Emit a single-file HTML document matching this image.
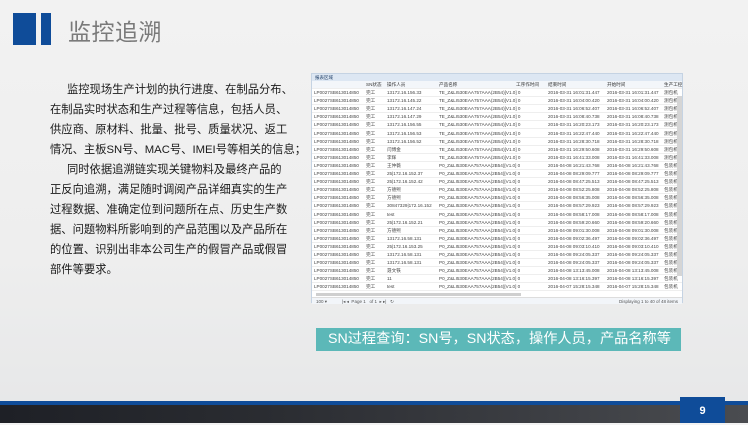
<!DOCTYPE html>
<html><head><meta charset="utf-8"><style>
*{margin:0;padding:0;box-sizing:border-box}
body{width:748px;height:423px;overflow:hidden;background:linear-gradient(180deg,#f2f2f2 0%,#eeeeee 60%,#e6e7e8 100%);font-family:"Liberation Sans","Noto Sans CJK SC",sans-serif;position:relative}
.b1{position:absolute;left:13px;top:13px;width:23px;height:32px;background:#0f4c99}
.b2{position:absolute;left:41px;top:13px;width:10px;height:32px;background:#0f4c99}
.title{position:absolute;left:68px;top:13px;font-size:23px;color:#7a7a7a;letter-spacing:0.5px}
.txt{position:absolute;left:50px;top:80px;font-size:11.3px;line-height:20px;color:#1a1a1a;white-space:nowrap}
.tbl{position:absolute;left:311px;top:73px;width:372px;height:230px;background:#fff;border:1px solid #c5d3e3}
.hb{height:7px;background:#dde7f3;font-size:4.5px;line-height:7px;padding-left:3px;color:#1f3e66}
.r{position:absolute;left:0;width:370px;height:8.1px;font-size:4.6px;line-height:8px;color:#444;border-bottom:1px solid #eee;white-space:nowrap}
.r span{position:absolute;top:0}
.c1{left:2px}.c2{left:54px}.c3{left:75px}.c4{left:127px}.c5{left:204px}.c6{left:236px}.c7{left:295px}.c8{left:352px}
.hd{color:#333;background:#f3f6fa}
.sb{position:absolute;right:0;top:22px;width:5px;height:180px;background:#d5d5d5}
.hs{position:absolute;left:4px;top:219px;width:205px;height:3px;background:#cfcfcf}
.pg{position:absolute;left:0;top:223px;width:370px;height:7px;background:#f2f5f9;font-size:4.5px;line-height:7px;color:#555;border-top:1px solid #ddd}
.tag{position:absolute;left:316px;top:328px;width:365px;height:23px;background:#5cb8b8;color:#fff;font-size:14.2px;line-height:23px;padding-left:12px;white-space:nowrap}
.bl{position:absolute;left:0;top:401px;width:748px;height:4px;background:#0f4c99}
.dk{position:absolute;left:0;top:405px;width:748px;height:18px;background:linear-gradient(90deg,#1e2026 0%,#2a2c31 35%,#3b3d42 70%,#4a4c50 100%)}
.pn{position:absolute;left:680px;top:397px;width:45px;height:26px;background:#0f4c99;color:#fff;font-size:11px;text-align:center;line-height:28px;font-weight:bold}
</style></head><body>
<div class="b1"></div><div class="b2"></div>
<div class="title">监控追溯</div>
<div class="txt">&emsp;&ensp;监控现场生产计划的执行进度、在制品分布、<br>在制品实时状态和生产过程等信息，包括人员、<br>供应商、原材料、批量、批号、质量状况、返工<br>情况、主板SN号、MAC号、IMEI号等相关的信息；<br>&emsp;&ensp;同时依据追溯链实现关键物料及最终产品的<br>正反向追溯，满足随时调阅产品详细真实的生产<br>过程数据、准确定位到问题所在点、历史生产数<br>据、问题物料所影响到的产品范围以及产品所在<br>的位置、识别出非本公司生产的假冒产品或假冒<br>部件等要求。</div>
<div class="tbl">
<div class="hb">报表区域</div>
<div class="r hd" style="top:7px"><span class="c2">SN状态</span><span class="c3">操作人员</span><span class="c4">产品名称</span><span class="c5">工序作时间</span><span class="c6">结束时间</span><span class="c7">开始时间</span><span class="c8">生产工控</span></div>
<div class="r" style="top:15px"><span class="c1">LP0027SB613014850</span><span class="c2">完工</span><span class="c3">13172.16.156.33</span><span class="c4">TE_Z&amp;LI530EAA757AAA(2B54)[V1.0] 0</span><span class="c6">2016-03-31 16:01:31.447</span><span class="c7">2016-03-31 16:01:31.447</span><span class="c8">测包机</span></div>
<div class="r" style="top:23.1px"><span class="c1">LP0027SB613014850</span><span class="c2">完工</span><span class="c3">13172.16.145.22</span><span class="c4">TE_Z&amp;LI530EAA757AAA(2B54)[V1.0] 0</span><span class="c6">2016-03-31 16:04:00.420</span><span class="c7">2016-03-31 16:04:00.420</span><span class="c8">测包机</span></div>
<div class="r" style="top:31.2px"><span class="c1">LP0027SB613014850</span><span class="c2">完工</span><span class="c3">13172.16.147.24</span><span class="c4">TE_Z&amp;LI530EAA757AAA(2B54)[V1.0] 0</span><span class="c6">2016-03-31 16:06:52.407</span><span class="c7">2016-03-31 16:06:52.407</span><span class="c8">测包机</span></div>
<div class="r" style="top:39.3px"><span class="c1">LP0027SB613014850</span><span class="c2">完工</span><span class="c3">13172.16.147.29</span><span class="c4">TE_Z&amp;LI530EAA757AAA(2B54)[V1.0] 0</span><span class="c6">2016-03-31 16:08:40.738</span><span class="c7">2016-03-31 16:08:40.738</span><span class="c8">测包机</span></div>
<div class="r" style="top:47.4px"><span class="c1">LP0027SB613014850</span><span class="c2">完工</span><span class="c3">13172.16.156.55</span><span class="c4">TE_Z&amp;LI530EAA757AAA(2B54)[V1.0] 0</span><span class="c6">2016-03-31 16:20:23.173</span><span class="c7">2016-03-31 16:20:23.173</span><span class="c8">测包机</span></div>
<div class="r" style="top:55.5px"><span class="c1">LP0027SB613014850</span><span class="c2">完工</span><span class="c3">13172.16.156.53</span><span class="c4">TE_Z&amp;LI530EAA757AAA(2B54)[V1.0] 0</span><span class="c6">2016-03-31 16:22:47.440</span><span class="c7">2016-03-31 16:22:47.440</span><span class="c8">测包机</span></div>
<div class="r" style="top:63.6px"><span class="c1">LP0027SB613014850</span><span class="c2">完工</span><span class="c3">13172.16.156.52</span><span class="c4">TE_Z&amp;LI530EAA757AAA(2B54)[V1.0] 0</span><span class="c6">2016-03-31 16:28:30.718</span><span class="c7">2016-03-31 16:28:30.718</span><span class="c8">测包机</span></div>
<div class="r" style="top:71.7px"><span class="c1">LP0027SB613014850</span><span class="c2">完工</span><span class="c3">闫博金</span><span class="c4">TE_Z&amp;LI530EAA757AAA(2B54)[V1.0] 0</span><span class="c6">2016-03-31 16:29:50.608</span><span class="c7">2016-03-31 16:29:50.608</span><span class="c8">测包机</span></div>
<div class="r" style="top:79.8px"><span class="c1">LP0027SB613014850</span><span class="c2">完工</span><span class="c3">李辉</span><span class="c4">TE_Z&amp;LI530EAA757AAA(2B54)[V1.0] 0</span><span class="c6">2016-03-31 16:41:33.008</span><span class="c7">2016-03-31 16:41:33.008</span><span class="c8">测包机</span></div>
<div class="r" style="top:87.9px"><span class="c1">LP0027SB613014850</span><span class="c2">完工</span><span class="c3">王仲薇</span><span class="c4">P0_Z&amp;LI530EAA757AAA(2B54)[V1.0] 0</span><span class="c6">2016-04-08 16:21:43.768</span><span class="c7">2016-04-08 16:21:43.768</span><span class="c8">包装机</span></div>
<div class="r" style="top:96px"><span class="c1">LP0027SB613014850</span><span class="c2">完工</span><span class="c3">25|172.16.152.37</span><span class="c4">P0_Z&amp;LI530EAA757AAA(2B54)[V1.0] 0</span><span class="c6">2016-04-08 08:29:09.777</span><span class="c7">2016-04-08 08:29:09.777</span><span class="c8">包装机</span></div>
<div class="r" style="top:104.1px"><span class="c1">LP0027SB613014850</span><span class="c2">完工</span><span class="c3">25|172.16.152.42</span><span class="c4">P0_Z&amp;LI530EAA757AAA(2B54)[V1.0] 0</span><span class="c6">2016-04-08 08:47:25.513</span><span class="c7">2016-04-08 08:47:25.513</span><span class="c8">包装机</span></div>
<div class="r" style="top:112.2px"><span class="c1">LP0027SB613014850</span><span class="c2">完工</span><span class="c3">方德熙</span><span class="c4">P0_Z&amp;LI530EAA757AAA(2B54)[V1.0] 0</span><span class="c6">2016-04-08 08:52:25.808</span><span class="c7">2016-04-08 08:52:25.808</span><span class="c8">包装机</span></div>
<div class="r" style="top:120.3px"><span class="c1">LP0027SB613014850</span><span class="c2">完工</span><span class="c3">方德熙</span><span class="c4">P0_Z&amp;LI530EAA757AAA(2B54)[V1.0] 0</span><span class="c6">2016-04-08 08:56:35.008</span><span class="c7">2016-04-08 08:56:35.008</span><span class="c8">包装机</span></div>
<div class="r" style="top:128.4px"><span class="c1">LP0027SB613014850</span><span class="c2">完工</span><span class="c3">30847329|172.16.152</span><span class="c4">P0_Z&amp;LI530EAA757AAA(2B54)[V1.0] 0</span><span class="c6">2016-04-08 08:57:29.923</span><span class="c7">2016-04-08 08:57:29.923</span><span class="c8">包装机</span></div>
<div class="r" style="top:136.5px"><span class="c1">LP0027SB613014850</span><span class="c2">完工</span><span class="c3">test</span><span class="c4">P0_Z&amp;LI530EAA757AAA(2B54)[V1.0] 0</span><span class="c6">2016-04-08 08:58:17.008</span><span class="c7">2016-04-08 08:58:17.008</span><span class="c8">包装机</span></div>
<div class="r" style="top:144.6px"><span class="c1">LP0027SB613014850</span><span class="c2">完工</span><span class="c3">25|172.16.152.21</span><span class="c4">P0_Z&amp;LI530EAA757AAA(2B54)[V1.0] 0</span><span class="c6">2016-04-08 08:59:20.660</span><span class="c7">2016-04-08 08:59:20.660</span><span class="c8">包装机</span></div>
<div class="r" style="top:152.7px"><span class="c1">LP0027SB613014850</span><span class="c2">完工</span><span class="c3">方德熙</span><span class="c4">P0_Z&amp;LI530EAA757AAA(2B54)[V1.0] 0</span><span class="c6">2016-04-08 09:01:30.008</span><span class="c7">2016-04-08 09:01:30.008</span><span class="c8">包装机</span></div>
<div class="r" style="top:160.8px"><span class="c1">LP0027SB613014850</span><span class="c2">完工</span><span class="c3">13172.16.58.131</span><span class="c4">P0_Z&amp;LI530EAA757AAA(2B54)[V1.0] 0</span><span class="c6">2016-04-08 09:02:36.497</span><span class="c7">2016-04-08 09:02:36.497</span><span class="c8">包装机</span></div>
<div class="r" style="top:168.9px"><span class="c1">LP0027SB613014850</span><span class="c2">完工</span><span class="c3">25|172.16.153.25</span><span class="c4">P0_Z&amp;LI530EAA757AAA(2B54)[V1.0] 0</span><span class="c6">2016-04-08 09:03:10.410</span><span class="c7">2016-04-08 09:03:10.410</span><span class="c8">包装机</span></div>
<div class="r" style="top:177px"><span class="c1">LP0027SB613014850</span><span class="c2">完工</span><span class="c3">13172.16.58.131</span><span class="c4">P0_Z&amp;LI530EAA757AAA(2B54)[V1.0] 0</span><span class="c6">2016-04-08 09:24:05.337</span><span class="c7">2016-04-08 09:24:05.337</span><span class="c8">包装机</span></div>
<div class="r" style="top:185.1px"><span class="c1">LP0027SB613014850</span><span class="c2">完工</span><span class="c3">13172.16.58.131</span><span class="c4">P0_Z&amp;LI530EAA757AAA(2B54)[V1.0] 0</span><span class="c6">2016-04-08 09:24:05.337</span><span class="c7">2016-04-08 09:24:05.337</span><span class="c8">包装机</span></div>
<div class="r" style="top:193.2px"><span class="c1">LP0027SB613014850</span><span class="c2">完工</span><span class="c3">聂文铁</span><span class="c4">P0_Z&amp;LI530EAA757AAA(2B54)[V1.0] 0</span><span class="c6">2016-04-08 13:13:45.008</span><span class="c7">2016-04-08 13:13:45.008</span><span class="c8">包装机</span></div>
<div class="r" style="top:201.3px"><span class="c1">LP0027SB613014850</span><span class="c2">完工</span><span class="c3">11</span><span class="c4">P0_Z&amp;LI530EAA757AAA(2B54)[V1.0] 0</span><span class="c6">2016-04-08 13:16:15.397</span><span class="c7">2016-04-08 13:16:15.397</span><span class="c8">包装机</span></div>
<div class="r" style="top:209.4px"><span class="c1">LP0027SB613014850</span><span class="c2">完工</span><span class="c3">test</span><span class="c4">P0_Z&amp;LI530EAA757AAA(2B54)[V1.0] 0</span><span class="c6">2016-04-07 15:28:15.348</span><span class="c7">2016-04-07 15:28:15.348</span><span class="c8">包装机</span></div>
<div class="sb"></div>
<div class="hs"></div>
<div class="pg"><span style="position:absolute;left:4px">100 ▾</span><span style="position:absolute;left:30px">|◂ ◂ &nbsp;Page 1 &nbsp; of 1 &nbsp;▸ ▸| &nbsp;&nbsp;↻</span><span style="position:absolute;right:4px">Displaying 1 to 40 of 48 items</span></div>
</div>
<div class="tag">SN过程查询：SN号，SN状态，操作人员，产品名称等</div>
<div class="bl"></div><div class="dk"></div>
<div class="pn">9</div>
</body></html>
